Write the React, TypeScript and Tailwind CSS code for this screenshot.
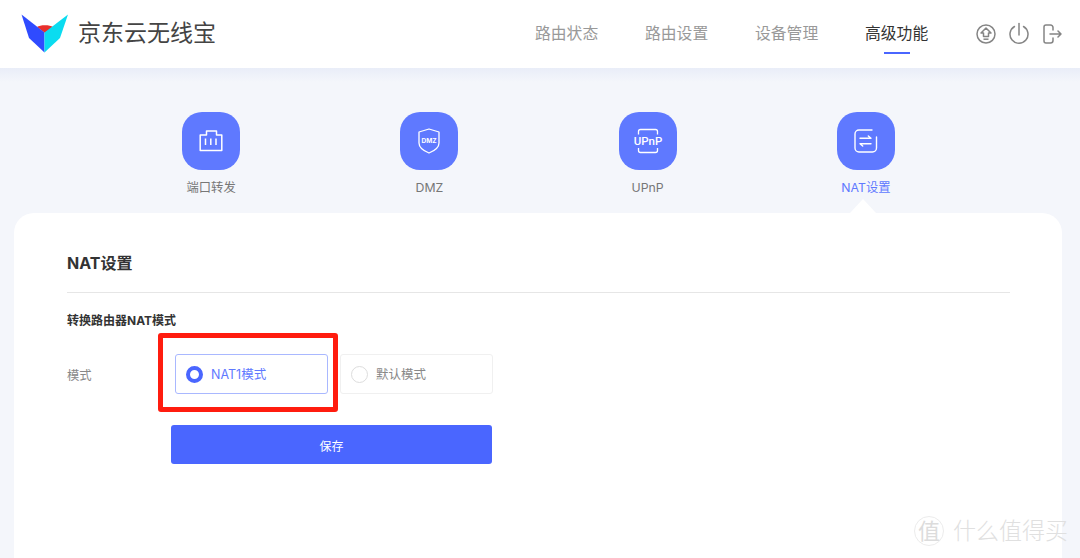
const navItems = ["路由状态", "路由设置", "设备管理", "高级功能"];

function Logo() {
  return (
    <svg width="48" height="40" viewBox="0 0 48 40" className="shrink-0">
      <path d="M16 13 C19 10.500 29 10.500 32 13 L24 19 Z" fill="#e8302c" />
      <path d="M0.500 0.500 L23.500 18.500 V38.500 L8 24 Z" fill="#2f4bff" />
      <path d="M47 0.500 L23.500 18.500 V38.500 L39 24 Z" fill="#0adcf0" />
    </svg>
  );
}

function UpgradeIcon() {
  return (
    <svg width="20" height="20" viewBox="0 0 20 20" fill="none" stroke="#858585" strokeWidth="1.500">
      <circle cx="10" cy="10" r="9" />
      <path d="M10 4 L15 9 H12.500 V12.500 H7.500 V9 H5 Z" strokeLinejoin="round" />
      <path d="M7.500 15.200 H12.500" />
    </svg>
  );
}

function PowerIcon() {
  return (
    <svg width="20" height="20" viewBox="0 0 20 20" fill="none" stroke="#858585" strokeWidth="1.500" strokeLinecap="round" className="overflow-visible">
      <path d="M5.500 2.500 A9 9 0 1 0 14.500 2.500" />
      <path d="M10 -0.500 V11" />
    </svg>
  );
}

function LogoutIcon() {
  return (
    <svg width="20" height="20" viewBox="0 0 20 20" fill="none" stroke="#858585" strokeWidth="1.500" strokeLinecap="round" strokeLinejoin="round">
      <path d="M11 6 V3.500 A2.500 2.500 0 0 0 8.500 1 H4 A2 2 0 0 0 2 3 V17 A2 2 0 0 0 4 19 H8.500 A2.500 2.500 0 0 0 11 16.500 V14" />
      <path d="M8 10 H19 M16 7 L19 10 L16 13" />
    </svg>
  );
}

function PortIcon() {
  return (
    <svg width="24" height="22" viewBox="0 0 24 22" fill="none" stroke="#fff" strokeWidth="1.500">
      <path d="M7.500 5 V1 H17.500 V5 H22.800 V20.500 H1.200 V5 Z" strokeLinejoin="round" />
      <path d="M6.500 8.500 V15 M11.800 8.500 V15 M17 8.500 V15" />
    </svg>
  );
}

function DmzIcon() {
  return (
    <svg width="22" height="26" viewBox="0 0 22 26" fill="none">
      <path d="M11 1 L21 4 V15 C21 19.500 16 23 11 25 C6 23 1 19.500 1 15 V4 Z" stroke="#fff" strokeWidth="1.300" strokeLinejoin="round" />
      <text x="11" y="14.500" textAnchor="middle" fontSize="6.500" fontWeight="700" fill="#fff" fontFamily="Inter, sans-serif">DMZ</text>
    </svg>
  );
}

function UpnpIcon() {
  return (
    <svg width="30" height="26" viewBox="0 0 30 26" fill="none">
      <path d="M5.500 6 V3 A2 2 0 0 1 7.500 1 H22.500 A2 2 0 0 1 24.500 3 V6 M5.500 19.500 V22 A2 2 0 0 0 7.500 24 H22.500 A2 2 0 0 0 24.500 22 V19.500" stroke="#fff" strokeWidth="1.300" transform="translate(0 0.500)" />
      <text x="15" y="17" textAnchor="middle" fontSize="11.500" fontWeight="500" fill="#fff" fontFamily="Roboto, sans-serif">UPnP</text>
    </svg>
  );
}

function NatIcon() {
  return (
    <svg width="24" height="24" viewBox="0 0 24 24" fill="none" stroke="#fff" strokeWidth="1.400" strokeLinecap="round" strokeLinejoin="round">
      <path d="M18 1 H5 A4 4 0 0 0 1 5 V19 A4 4 0 0 0 5 23 H18.500 A4 4 0 0 0 22.500 19 V8" />
      <path d="M6 9.300 H17 L14.300 7 M17 14.800 H6 L8.700 17" />
    </svg>
  );
}

const tiles = [
  { label: "端口转发", icon: <PortIcon /> },
  { label: "DMZ", icon: <DmzIcon /> },
  { label: "UPnP", icon: <UpnpIcon /> },
  { label: "NAT设置", icon: <NatIcon />, active: true },
];

export default function App() {
  return (
    <div className="relative h-[558px] overflow-hidden bg-[#f4f6fb] font-['Inter','Noto_Sans_CJK_SC',sans-serif]">
      <header className="flex h-[68px] items-center bg-white pb-[1px] pl-[21px] pr-[18px]">
        <Logo />
        <span className="ml-[9px] text-[23px] text-[#444]">京东云无线宝</span>
        <nav className="ml-auto flex h-full gap-[47px]">
          {navItems.map((item, i) => (
            <div key={item} className={"relative flex w-[63px] items-center whitespace-nowrap text-[15.800px] " + (i === 3 ? "text-[#333]" : "text-[#999]")}>
              {item}
              {i === 3 && <span className="absolute bottom-[13px] left-[19px] h-[2px] w-[26px] bg-[#4a66ff]" />}
            </div>
          ))}
        </nav>
        <div className="ml-[48px] flex gap-[13px]">
          <UpgradeIcon />
          <PowerIcon />
          <LogoutIcon />
        </div>
      </header>
      <div className="h-[14px] bg-gradient-to-b from-[#e9edf8] to-[#f4f6fb]" />

      <div className="grid h-[115px] grid-cols-4 pl-[102px] pr-[105px] pt-[30px]">
        {tiles.map((t) => (
          <div key={t.label} className="relative flex flex-col items-center">
            <div className="flex h-[58px] w-[58px] items-center justify-center rounded-[20px] bg-[#5f79ff]">{t.icon}</div>
            <span className={"mt-[10px] text-[12.300px] leading-4 " + (t.active ? "text-[#5f79ff]" : "text-[#777]")}>{t.label}</span>
            {t.active && <span className="absolute left-[93px] top-[87px] h-0 w-0 border-x-[13px] border-b-[14px] border-x-transparent border-b-white" />}
          </div>
        ))}
      </div>

      <main className="mx-[14px] mr-[18px] mt-[16px] h-[400px] rounded-t-[20px] bg-white pl-[53px] pr-[52px] pt-[40px]">
        <h2 className="border-b border-[#e6e6e6] pb-[18px] text-base font-bold leading-[21px] text-[#333]">NAT设置</h2>
        <h3 className="mt-[20px] text-xs font-bold leading-4 text-[#333]">转换路由器NAT模式</h3>
        <div className="mt-[25px] flex items-center">
          <span className="w-[108px] pt-[5px] text-[12.300px] text-[#888]">模式</span>
          <div className="flex h-10 w-[153px] items-center rounded-[3px] border border-[#a9b8ff] pl-[10px] text-[12.500px] text-[#5f79ff]">
            <span className="mr-2 h-[17px] w-[17px] rounded-full border-[4.500px] border-[#4a66ff]" />
            <span className="pt-[3px]">NAT1模式</span>
          </div>
          <div className="ml-3 flex h-10 w-[153px] items-center rounded-[3px] border border-[#f0f0f0] pl-[10px] text-[12.500px] text-[#888]">
            <span className="mr-2 h-[17px] w-[17px] rounded-full border border-[#ddd]" />
            <span className="pt-[3px]">默认模式</span>
          </div>
        </div>
        <button className="ml-[104px] mt-[31px] block h-[39px] w-[321px] rounded-[3px] bg-[#4a66ff] pt-[4px] text-xs text-white">保存</button>
      </main>

      {/* annotation + watermark sit over the page */}
      <div className="absolute left-[158px] top-[333px] h-[79px] w-[180px] rounded-[3px] border-[5px] border-[#ff1c0f]" />
      <div className="absolute left-[914px] top-[516px] flex items-center text-[#e0e0e0]">
        <span className="flex h-[30px] w-[30px] items-center justify-center rounded-full border border-[#ececec] text-[22px] text-[#dcdcdc]">值</span>
        <span className="ml-[9px] text-[23px] font-light leading-[30px]">什么值得买</span>
      </div>
    </div>
  );
}
